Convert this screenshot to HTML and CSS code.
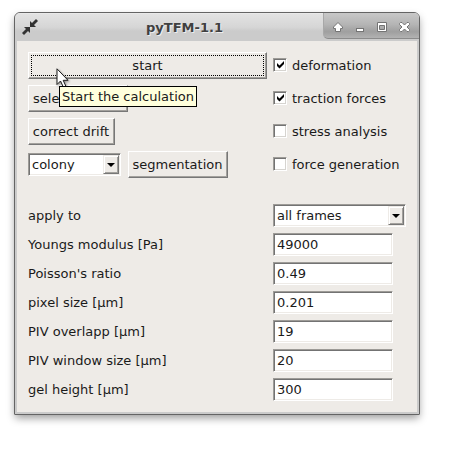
FILE: index.html
```html
<!DOCTYPE html>
<html lang="en">
<head>
<meta charset="utf-8">
<title>pyTFM-1.1</title>
<link rel="stylesheet" href="styles.css">
</head>
<body>
<main class="window">
  <header class="titlebar">
    <svg class="app-icon" width="16" height="16" viewBox="0 0 16 16"><path d="M0 14 4 10 2 8H8V14L6 12 2 16ZM14 0 10 4 8 2V8H14L12 6 16 2Z"/></svg>
    <h1 class="title">pyTFM-1.1</h1>
    <div class="controls">
      <svg width="95" height="25" viewBox="1 0 95 25">
        <path class="glyph" d="M15 9.500 19.500 14V15.500H17.500V18.500H12.500V15.500H10.500V14Z"/>
        <rect class="glyph" x="33.500" y="15.500" width="7" height="3"/>
        <path class="glyph" fill-rule="evenodd" d="M54.500 9.500h9v9h-9zM56.500 12.500v4h5v-4z"/>
        <path class="glyph" d="M77.500 9.500h1.500l2.500 2.500 2.500-2.500h1.500l1 1v1L84 14l2.500 2.500v1l-1 1H84L81.500 16 79 18.500h-1.500l-1-1v-1L79 14l-2.500-2.500v-1z"/>
      </svg>
    </div>
  </header>
  <div class="client">
    <section class="actions">
      <div class="left">
        <button class="btn start"><span class="focus">start</span></button>
        <button class="btn select">select images</button>
        <button class="btn drift">correct drift</button>
        <div class="pair">
          <div class="field combo colony"><span>colony</span><i class="drop"></i></div>
          <button class="btn segment">segmentation</button>
        </div>
      </div>
      <div class="checks">
        <label class="check"><span class="box"><svg width="9" height="9"><path d="M1 3 3.500 5.500 8 1V4L3.500 8.500 1 6Z"/></svg></span>deformation</label>
        <label class="check"><span class="box"><svg width="9" height="9"><path d="M1 3 3.500 5.500 8 1V4L3.500 8.500 1 6Z"/></svg></span>traction forces</label>
        <label class="check"><span class="box"></span>stress analysis</label>
        <label class="check"><span class="box"></span>force generation</label>
      </div>
    </section>
    <section class="params">
      <span>apply to</span><div class="field combo frames"><span>all frames</span><i class="drop"></i></div>
      <span>Youngs modulus [Pa]</span><div class="field">49000</div>
      <span>Poisson's ratio</span><div class="field">0.49</div>
      <span>pixel size [µm]</span><div class="field">0.201</div>
      <span>PIV overlapp [µm]</span><div class="field">19</div>
      <span>PIV window size [µm]</span><div class="field">20</div>
      <span>gel height [µm]</span><div class="field">300</div>
    </section>
  </div>
</main>
<svg class="cursor" width="15" height="22" viewBox="0 0 15 22"><path d="M1 .8V16.500L4.500 13 7.500 19.500 10 18.500 7.200 12.300H12Z"/></svg>
<div class="tooltip">Start the calculation</div>
</body>
</html>
```
FILE: styles.css
```css
* { box-sizing: border-box; }
body {
  margin: 0;
  padding: 12px 0 0 14px;
  height: 454px;
  overflow: hidden;
  background: #fff;
  color: #1a1a1a;
  font: 13px/16px "DejaVu Sans", sans-serif;
}
.window {
  width: 406px;
  height: 403px;
  border: 1px solid #646464;
  border-radius: 6px 6px 1px 1px;
  background: #cbcbcb;
  box-shadow: 0 4px 9px -1px rgba(0, 0, 0, .4);
}
.titlebar {
  display: flex;
  height: 28px;
  border-radius: 5px 5px 0 0;
  background: linear-gradient(#f0f0f0 0, #e2e2e2 1px, #d6d6d6 50%, #cbcbcb 65%, #cbcbcb);
}
.app-icon { margin: 6px 0 0 7px; fill: #333; }
.title {
  flex: 1;
  margin: 0;
  padding-left: 8px;
  text-align: center;
  font-size: 13px;
  line-height: 29px;
  color: #404040;
  text-shadow: 1px 1px #eee;
}
.controls {
  width: 96px;
  height: 26px;
  border-left: 1px solid #a8a8a8;
  border-bottom: 1px solid #8b8b8b;
  border-radius: 0 5px 0 5px;
  background: linear-gradient(#c8c8c8, #b5b5b5 45%, #9f9f9f 75%, #b2b2b2);
}
.controls svg { display: block; }
.glyph { fill: #fff; stroke: #747474; stroke-width: 1; }
.client {
  height: 371px;
  margin: 0 2px;
  padding: 11px;
  background: #eeebe7;
}
.actions { display: flex; height: 152px; }
.left { width: 245px; display: flex; flex-direction: column; align-items: flex-start; gap: 6px; }
.btn {
  height: 27px;
  margin: 0;
  padding: 0 1px 0 0;
  border: 1px solid;
  border-color: #fff #777 #777 #fff;
  background: #eeebe7;
  box-shadow: inset -1px -1px #a3a19d;
  color: inherit;
  font: inherit;
  white-space: nowrap;
}
.start { width: 239px; padding: 2px; }
.focus {
  display: block;
  width: 233px;
  height: 21px;
  border: 1px dotted #000;
  line-height: 19px;
}
.select { width: 100px; padding-left: 4px; text-align: left; }
.drift { width: 87px; }
.segment { width: 100px; }
.pair { display: flex; align-items: center; gap: 7px; }
.field {
  width: 120px;
  height: 23px;
  border: 1px solid;
  border-color: #9d9b97 #fff #fff #9d9b97;
  padding-left: 3px;
  line-height: 21px;
  background: #fff;
  box-shadow: inset 1px 1px #737373, inset -1px -1px #eeebe7;
}
.combo { display: flex; justify-content: space-between; padding: 1px 1px 1px 3px; line-height: 19px; }
.colony { width: 93px; }
.frames { width: 133px; }
.drop {
  display: flex;
  justify-content: center;
  align-items: center;
  width: 16px;
  height: 19px;
  border: 1px solid;
  border-color: #eeebe7 #777 #777 #eeebe7;
  background: #eeebe7;
  box-shadow: inset 1px 1px #fff, inset -1px -1px #a3a19d;
}
.drop::before {
  content: "";
  border: 4px solid transparent;
  border-top-color: #000;
  border-bottom: 0;
}
.check { display: flex; align-items: center; height: 27px; margin-bottom: 6px; gap: 5px; }
.box {
  display: block;
  width: 14px;
  height: 14px;
  margin-top: -1px;
  padding: 1px 0 0 2px;
  border: 1px solid;
  border-color: #9d9b97 #fff #fff #9d9b97;
  background: #fff;
  box-shadow: inset 1px 1px #737373, inset -1px -1px #d6d4d0;
}
.box svg { display: block; }
.params {
  display: grid;
  grid-template-columns: 245px auto;
  grid-auto-rows: 23px;
  row-gap: 6px;
  align-items: center;
}
.tooltip {
  position: absolute;
  left: 59px;
  top: 86px;
  width: 138px;
  height: 21px;
  border: 1px solid #000;
  padding-left: 2px;
  line-height: 19px;
  white-space: nowrap;
  background: #ffffdc;
}
.cursor {
  position: absolute;
  left: 56px;
  top: 68px;
  fill: #fff;
  stroke: #1a1a1a;
  filter: drop-shadow(1px 1px 1px rgba(0, 0, 0, .4));
}
```
